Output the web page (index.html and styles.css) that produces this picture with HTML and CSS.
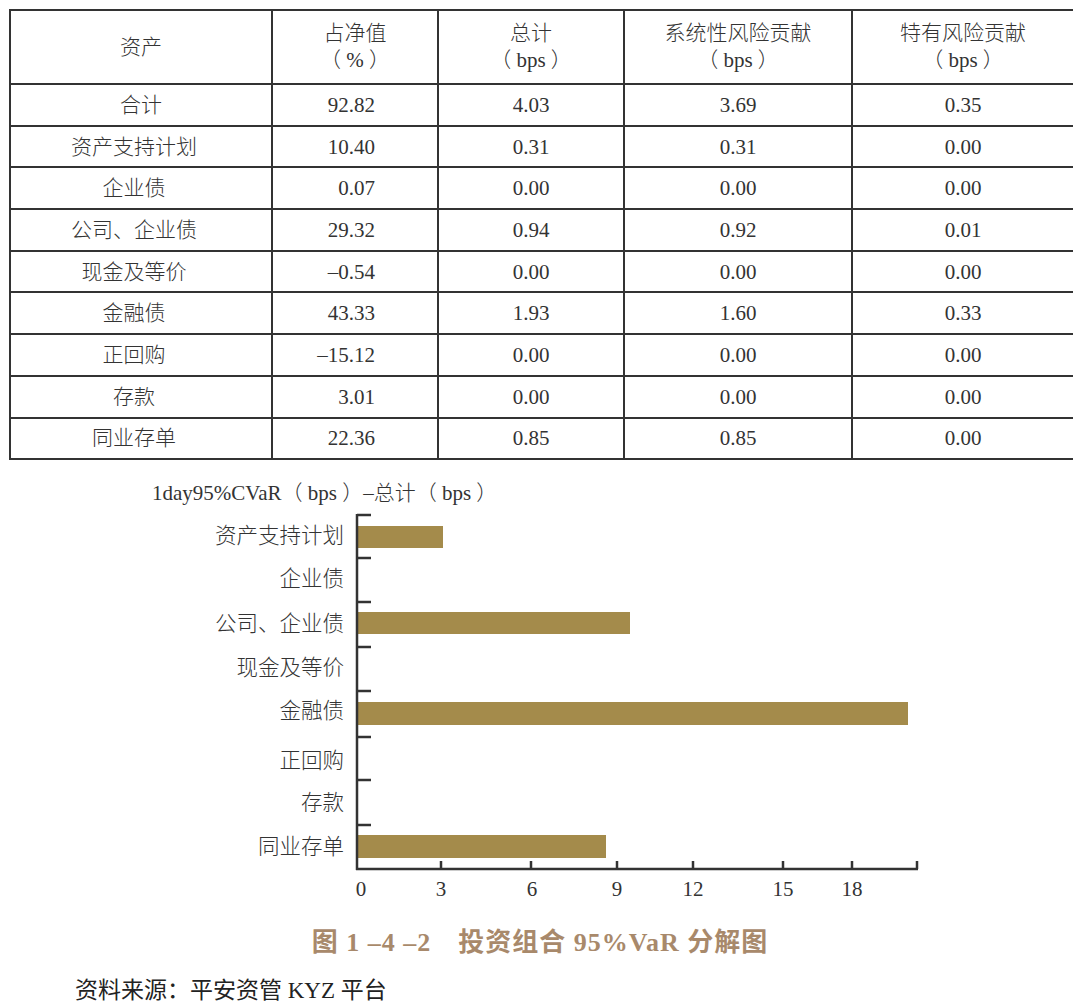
FILE: index.html
```html
<!DOCTYPE html>
<html lang="zh-CN">
<head>
<meta charset="utf-8">
<title>投资组合 95%VaR 分解图</title>
<link rel="stylesheet" href="styles.css">
</head>
<body>
<div class="page">
  <table class="risk-table">
    <colgroup>
      <col class="c1"><col class="c2"><col class="c3"><col class="c4"><col class="c5">
    </colgroup>
    <thead>
      <tr class="head-row">
        <th>资产</th>
        <th>占净值<br>（ % ）</th>
        <th>总计<br>（ bps ）</th>
        <th>系统性风险贡献<br>（ bps ）</th>
        <th>特有风险贡献<br>（ bps ）</th>
      </tr>
    </thead>
    <tbody>
      <tr><td class="total">合计</td><td class="num">92.82</td><td>4.03</td><td>3.69</td><td>0.35</td></tr>
      <tr><td>资产支持计划</td><td class="num">10.40</td><td>0.31</td><td>0.31</td><td>0.00</td></tr>
      <tr><td>企业债</td><td class="num">0.07</td><td>0.00</td><td>0.00</td><td>0.00</td></tr>
      <tr><td>公司、企业债</td><td class="num">29.32</td><td>0.94</td><td>0.92</td><td>0.01</td></tr>
      <tr><td>现金及等价</td><td class="num">–0.54</td><td>0.00</td><td>0.00</td><td>0.00</td></tr>
      <tr><td>金融债</td><td class="num">43.33</td><td>1.93</td><td>1.60</td><td>0.33</td></tr>
      <tr><td>正回购</td><td class="num">–15.12</td><td>0.00</td><td>0.00</td><td>0.00</td></tr>
      <tr><td>存款</td><td class="num">3.01</td><td>0.00</td><td>0.00</td><td>0.00</td></tr>
      <tr><td>同业存单</td><td class="num">22.36</td><td>0.85</td><td>0.85</td><td>0.00</td></tr>
    </tbody>
  </table>

  <section class="chart">
    <div class="chart-title">1day95%CVaR（ bps ）–总计（ bps ）</div>
    <svg class="chart-svg" width="1080" height="400" viewBox="0 506 1080 400" xmlns="http://www.w3.org/2000/svg">
      <g class="bars">
        <rect x="358" y="527" width="85" height="22"/>
        <rect x="358" y="613" width="272" height="22"/>
        <rect x="358" y="703" width="550" height="23"/>
        <rect x="358" y="836" width="248" height="23"/>
      </g>
      <g class="axis">
        <line x1="357" y1="515" x2="357" y2="871"/>
        <line x1="356" y1="870" x2="918" y2="870"/>
        <line x1="357" y1="516" x2="371" y2="516"/>
        <line x1="357" y1="559" x2="371" y2="559"/>
        <line x1="357" y1="603" x2="371" y2="603"/>
        <line x1="357" y1="648" x2="371" y2="648"/>
        <line x1="357" y1="692" x2="371" y2="692"/>
        <line x1="357" y1="738" x2="371" y2="738"/>
        <line x1="357" y1="781" x2="371" y2="781"/>
        <line x1="357" y1="826" x2="371" y2="826"/>
        <line x1="441" y1="862" x2="441" y2="870"/>
        <line x1="531" y1="862" x2="531" y2="870"/>
        <line x1="617" y1="862" x2="617" y2="870"/>
        <line x1="693" y1="862" x2="693" y2="870"/>
        <line x1="783" y1="862" x2="783" y2="870"/>
        <line x1="852" y1="862" x2="852" y2="870"/>
        <line x1="917" y1="862" x2="917" y2="870"/>
      </g>
      <g class="ylabels">
        <text x="344" y="537">资产支持计划</text>
        <text x="344" y="580">企业债</text>
        <text x="344" y="625">公司、企业债</text>
        <text x="344" y="669">现金及等价</text>
        <text x="344" y="712">金融债</text>
        <text x="344" y="762">正回购</text>
        <text x="344" y="804">存款</text>
        <text x="344" y="848">同业存单</text>
      </g>
      <g class="xlabels">
        <text x="361" y="890">0</text>
        <text x="441" y="890">3</text>
        <text x="532" y="890">6</text>
        <text x="617" y="890">9</text>
        <text x="693" y="890">12</text>
        <text x="783" y="890">15</text>
        <text x="852" y="890">18</text>
      </g>
    </svg>
  </section>

  <p class="caption">图 1 –4 –2　投资组合 95%VaR 分解图</p>
  <p class="source">资料来源：平安资管 KYZ 平台</p>
</div>
</body>
</html>
```

FILE: styles.css
```css
html, body {
  margin: 0;
  padding: 0;
  background: #ffffff;
}

body {
  width: 1080px;
  height: 1008px;
  overflow: hidden;
  color: #333333;
  font-family: "Liberation Serif", "Noto Sans CJK SC", serif;
  font-weight: 300;
}

.page {
  padding-top: 9px;
}

.risk-table {
  margin-left: 9px;
  width: 1063px;
  table-layout: fixed;
  border-collapse: collapse;
  border-top: 2px solid #333333;
  border-left: 2px solid #333333;
  border-right: 0 none;
  font-size: 21px;
  color: #333333;
}

.risk-table .c1 { width: 262px; }
.risk-table .c2 { width: 166px; }
.risk-table .c3 { width: 186px; }
.risk-table .c4 { width: 228px; }
.risk-table .c5 { width: 221px; }

.risk-table th,
.risk-table td {
  border: 2px solid #333333;
  padding: 0;
  text-align: center;
  vertical-align: middle;
  font-weight: 300;
}

.risk-table th:last-child,
.risk-table td:last-child {
  border-right: 0 none;
}

.risk-table th {
  height: 72px;
  line-height: 27px;
}

.risk-table td {
  height: 39.7px;
  line-height: 24px;
}

.risk-table td:first-child {
  padding-right: 14px;
}

.risk-table td.total {
  padding-right: 0;
}

.risk-table td.num {
  text-align: right;
  padding-right: 62px;
}

.chart {
  margin-top: 21px;
}

.chart-title {
  padding-left: 152px;
  font-size: 21px;
  line-height: 24px;
  height: 24px;
  color: #333333;
}

.chart-svg {
  display: block;
}

.bars rect {
  fill: #a48b4b;
}

.axis line {
  stroke: #333333;
  stroke-width: 2.5;
}

.ylabels text {
  font-family: "Liberation Serif", "Noto Sans CJK SC", serif;
  font-size: 21.5px;
  font-weight: 300;
  fill: #333333;
  text-anchor: end;
  dominant-baseline: central;
}

.xlabels text {
  font-family: "Liberation Serif", serif;
  font-size: 21px;
  fill: #333333;
  text-anchor: middle;
  dominant-baseline: central;
}

.caption {
  margin: 23px 0 0 0;
  text-align: center;
  font-size: 26px;
  line-height: 30px;
  font-weight: 700;
  color: #a8896b;
  letter-spacing: 1px;
}

.source {
  margin: 19px 0 0 75px;
  font-size: 23px;
  line-height: 28px;
  font-weight: 400;
  color: #222222;
}
```
